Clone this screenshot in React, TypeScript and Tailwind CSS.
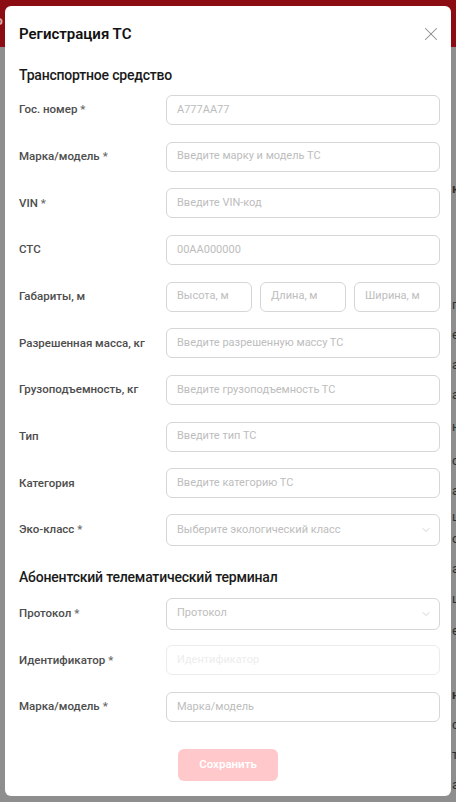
import { ChevronDown, X } from "lucide-react"

const font = { fontFamily: 'Roboto, "Noto Sans", sans-serif' }

type RowData = { label: string; placeholder: string; required?: boolean; select?: boolean; disabled?: boolean }

const vehicleRows: RowData[] = [
  { label: "Гос. номер", placeholder: "A777AA77", required: true },
  { label: "Марка/модель", placeholder: "Введите марку и модель ТС", required: true },
  { label: "VIN", placeholder: "Введите VIN-код", required: true },
  { label: "СТС", placeholder: "00AA000000" },
]

const vehicleRows2: RowData[] = [
  { label: "Разрешенная масса, кг", placeholder: "Введите разрешенную массу ТС" },
  { label: "Грузоподъемность, кг", placeholder: "Введите грузоподъемность ТС" },
  { label: "Тип", placeholder: "Введите тип ТС" },
  { label: "Категория", placeholder: "Введите категорию ТС" },
  { label: "Эко-класс", placeholder: "Выберите экологический класс", required: true, select: true },
]

// text of the page under the overlay, only its first letters show at the right edge
const behind = [
  { y: 180, t: "ю", b: true },
  { y: 296, t: "п" },
  { y: 326, t: "е" },
  { y: 356, t: "а" },
  { y: 386, t: "а" },
  { y: 418, t: "н" },
  { y: 452, t: "о" },
  { y: 482, t: "а" },
  { y: 508, t: "ц" },
  { y: 530, t: "о" },
  { y: 560, t: "а" },
  { y: 590, t: "ц" },
  { y: 622, t: "е" },
  { y: 686, t: "н", b: true },
  { y: 716, t: "с" },
  { y: 746, t: "т" },
  { y: 776, t: "а" },
]

function Label({ text, required }: { text: string; required?: boolean }) {
  return (
    <div className="w-[147px] shrink-0 text-[11.5px] font-medium text-[#4d4d4d]">
      {text}
      {required && <span className="ml-[3px] text-[#6b6b6b]">*</span>}
    </div>
  )
}

function Field({ placeholder, select, disabled }: { placeholder: string; select?: boolean; disabled?: boolean }) {
  return (
    <div
      className={`flex min-w-0 flex-1 items-center justify-between whitespace-nowrap rounded-[6px] border pl-[10px] pr-[7px] text-[11px] ${
        select ? "h-[32px]" : "h-[30px]"
      } ${disabled ? "border-[#ececec] text-[#ededed]" : "border-[#d6d6d6] text-[#bdbdbd]"}`}
    >
      <span>{placeholder}</span>
      {select && <ChevronDown className="size-[12px] text-[#bdbdbd]" strokeWidth={1.4} />}
    </div>
  )
}

function Row({ label, placeholder, required, select, disabled }: RowData) {
  return (
    <div className="flex h-[46.67px] items-start">
      <div className="flex h-[30px] w-full items-center">
        <Label text={label} required={required} />
        <Field placeholder={placeholder} select={select} disabled={disabled} />
      </div>
    </div>
  )
}

export default function App() {
  return (
    <div className="relative h-[802px] w-[456px] overflow-hidden bg-[#8e8e8e]" style={font}>
      <div className="h-[47px] bg-[#8b0c13]">
        <span className="ml-[-6px] inline-block pt-[14px] text-[14px] font-semibold text-[#d9a8ab]">Р</span>
      </div>
      {behind.map((b) => (
        <span
          key={b.y}
          className={`absolute left-[452px] text-[13px] leading-[18px] text-[#2e2e2e] ${b.b ? "font-bold" : ""}`}
          style={{ top: b.y }}
        >
          {b.t}
        </span>
      ))}

      <div className="absolute left-[5px] top-[6px] flex h-[790px] w-[446px] flex-col rounded-[6px] bg-white pl-[14px] pr-[11px]">
        <div className="flex h-[56px] items-center justify-between">
          <h2 className="text-[15px] font-semibold text-[#111]">Регистрация ТС</h2>
          <X className="mr-[-2px] size-[22px] text-[#8c8c8c]" strokeWidth={1.1} />
        </div>

        <h3 className="flex h-[26px] items-center text-[14px] font-medium tracking-[-0.2px] text-[#1a1a1a]">
          Транспортное средство
        </h3>

        <div className="mt-[7px] flex flex-col">
          {vehicleRows.map((r) => (
            <Row key={r.label} {...r} />
          ))}
          <div className="flex h-[46.67px] items-start">
            <div className="flex h-[30px] w-full items-center">
              <Label text="Габариты, м" />
              <div className="flex flex-1 gap-[8px]">
                <Field placeholder="Высота, м" />
                <Field placeholder="Длина, м" />
                <Field placeholder="Ширина, м" />
              </div>
            </div>
          </div>
          {vehicleRows2.map((r) => (
            <Row key={r.label} {...r} />
          ))}
        </div>

        <h3 className="mt-[3px] flex h-[26px] items-center text-[14px] font-medium tracking-[-0.2px] text-[#1a1a1a]">
          Абонентский телематический терминал
        </h3>

        <div className="mt-[8px] flex flex-col">
          <Row label="Протокол" placeholder="Протокол" required select />
          <Row label="Идентификатор" placeholder="Идентификатор" required disabled />
          <Row label="Марка/модель" placeholder="Марка/модель" required />
        </div>

        <div className="mt-[10px] flex justify-center pr-[3px]">
          <button className="h-[32px] w-[100px] rounded-[6px] bg-[#ffc8cb] text-[11.5px] font-semibold text-white">
            Сохранить
          </button>
        </div>
      </div>
    </div>
  )
}
